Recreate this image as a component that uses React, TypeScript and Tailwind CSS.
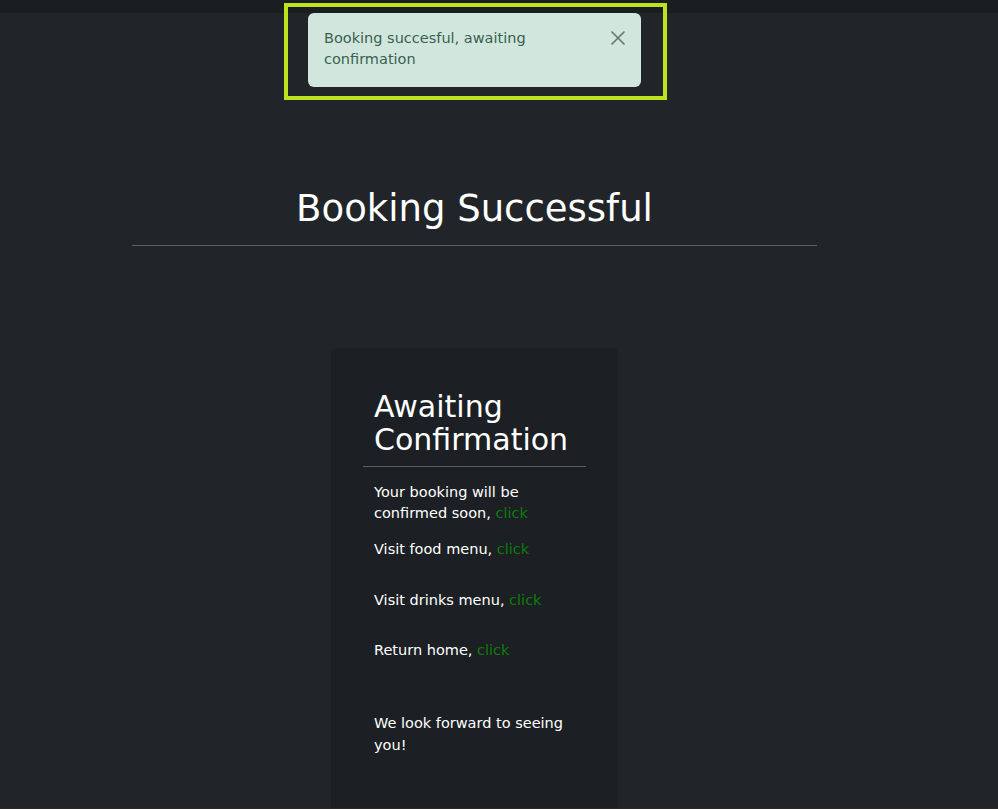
const Click = () => <span className="text-[#0b7d0b]">click</span>;

export default function App() {
  return (
    <div className="relative min-h-screen bg-[#212529] font-['DejaVu_Sans',sans-serif] text-white">
      <div className="h-[13px] bg-[#1b1e21]" />

      {/* toast */}
      <div className="absolute left-[308px] top-[13px] w-[333px] rounded-md bg-[#d1e7dd] pb-[17px] pl-4 pr-4 pt-[15px] text-[#3b5f51]">
        <p className="w-[260px] text-[14.5px] leading-[21px]">Booking succesful, awaiting confirmation</p>
        <button className="absolute right-[15px] top-[17px] text-[#6b7771]" aria-label="Close">
          <svg width="16" height="16" viewBox="0 0 16 16" fill="none" stroke="currentColor" strokeWidth="1.7">
            <path d="M1.5 1.5L14.5 14.5M14.5 1.5L1.5 14.5" />
          </svg>
        </button>
      </div>
      <div className="pointer-events-none absolute left-[284px] top-[3px] h-[97px] w-[383px] border-4 border-[#bde31e]" />

      <div className="ml-[132px] w-[685px]">
        <h1 className="pt-[172px] text-center text-[37px] leading-[48px]">Booking Successful</h1>
        <hr className="mt-[12px] border-t border-[#5c5f63]" />

        <div className="mx-auto mt-[102px] w-[287px] rounded-t-md bg-[#1c1f23] px-8 pb-[52px] pt-[42px]">
          <h2 className="pl-[11px] text-[30px] leading-[33px]">Awaiting Confirmation</h2>
          <hr className="mt-[10px] border-t border-[#5c5f63]" />
          <div className="pl-[11px] text-[14.5px] leading-[21px]">
            <p className="mt-[15px]">
              Your booking will be confirmed soon, <Click />
            </p>
            <p className="mt-[15px]">
              Visit food menu, <Click />
            </p>
            <p className="mt-[30px]">
              Visit drinks menu, <Click />
            </p>
            <p className="mt-[29px]">
              Return home, <Click />
            </p>
            <p className="mt-[51px] leading-[22px]">We look forward to seeing you!</p>
          </div>
        </div>
      </div>
      <div className="h-[3px] bg-[#2b2925]" />
    </div>
  );
}
